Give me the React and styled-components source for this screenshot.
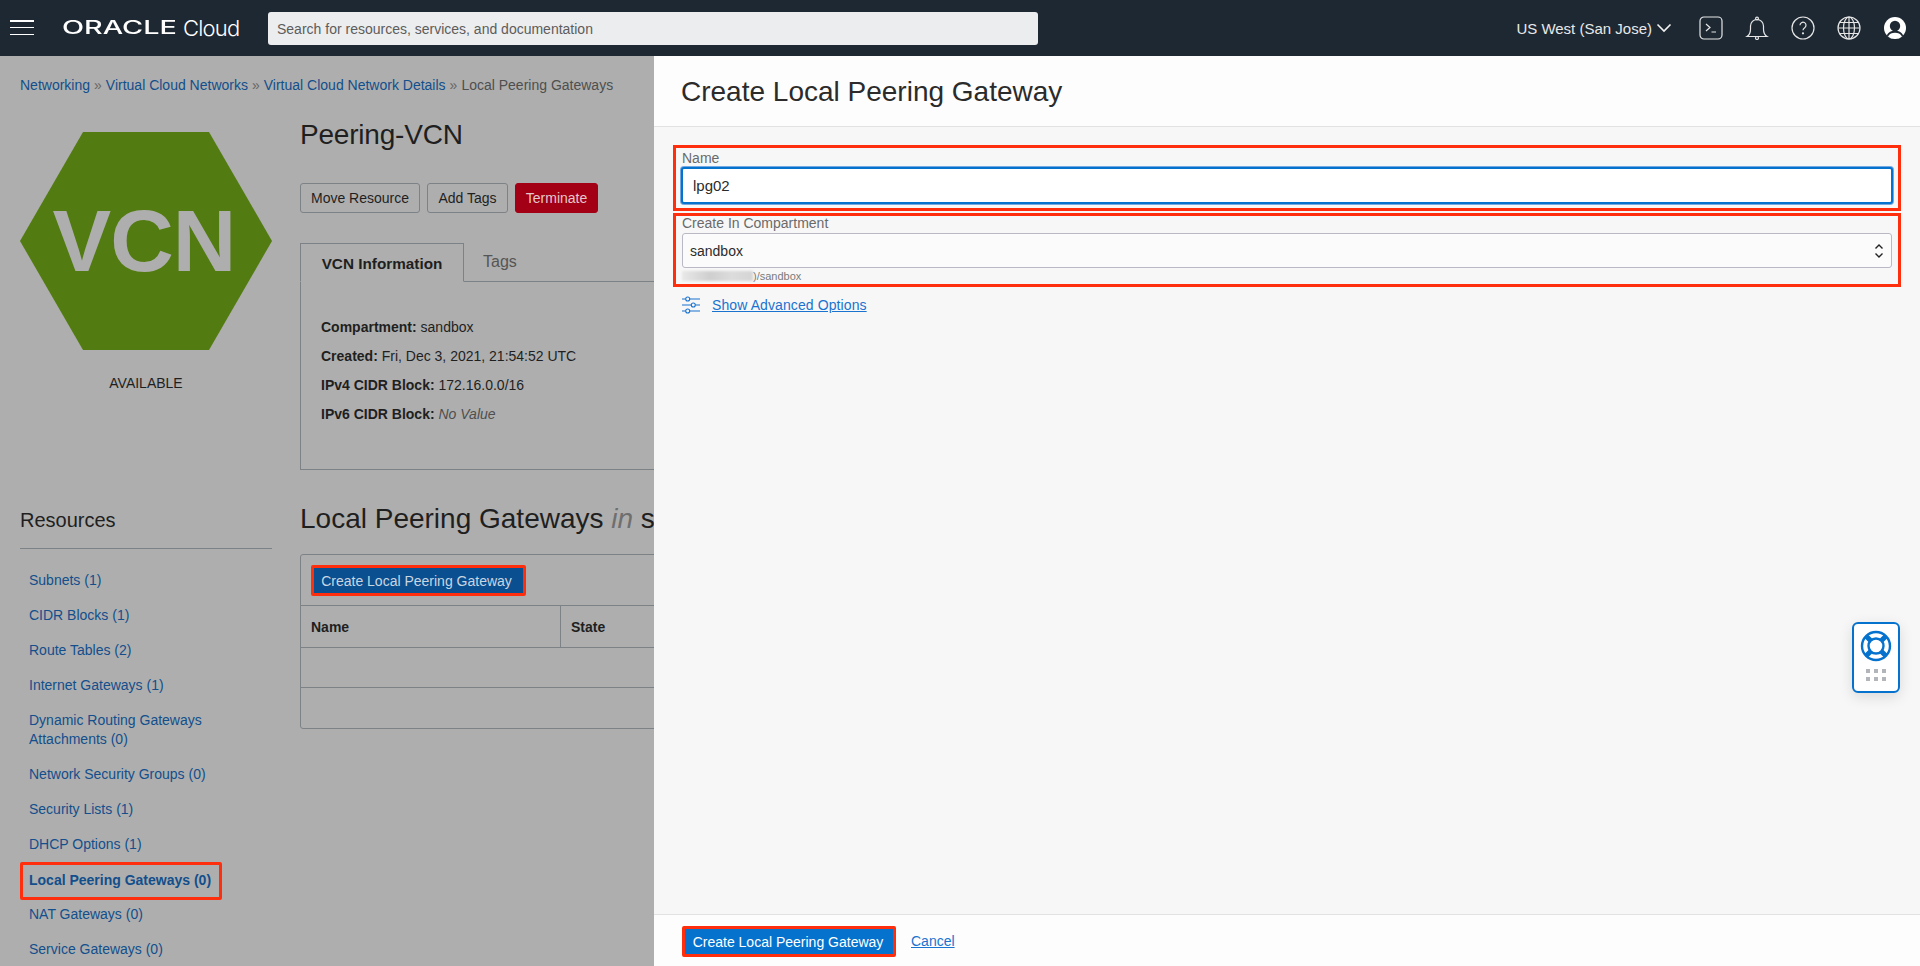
import React from "react";
import styled, { createGlobalStyle } from "styled-components";

const Global = createGlobalStyle`
  html, body { margin: 0; padding: 0; height: 100%; overflow: hidden; }
  body { font-family: "Liberation Sans", Arial, sans-serif; font-size: 14px; color: #1f1f1f; background: #aeaeae; }
  * { box-sizing: border-box; }
`;
const FONT = `"Liberation Sans", Arial, sans-serif`;

const Page = styled.div`position: relative; width: 1920px; height: 966px; display: flex; flex-direction: column; overflow: hidden;`;

/* top bar */
const TopBar = styled.header`flex: none; height: 56px; background: #1e2833; display: flex; align-items: center; color: #f2f2f2;`;
const Burger = styled.div`
  width: 24px; height: 15px; margin-left: 10px; margin-top: -1px;
  display: flex; flex-direction: column; justify-content: space-between;
  span { display: block; height: 1.5px; background: #fff; }
`;
const Logo = styled.div`display: flex; align-items: center; margin-left: 28px; width: 206px; color: #fff;`;
const LogoWord = styled.span`
  display: inline-block; width: 114px; font-family: Inter, sans-serif; font-weight: 500; font-size: 18px; line-height: 20px;
  transform: scaleX(1.6); transform-origin: left center;
`;
const LogoCloud = styled.span`margin-left: 7px; font-family: Inter, sans-serif; font-size: 22px; font-weight: 300; letter-spacing: -0.8px; line-height: 26px;`;
const Search = styled.div`
  width: 770px; height: 33px; background: #ecedee; border-radius: 3px; padding: 2px 0 0 9px;
  display: flex; align-items: center; color: #5c5c5c; font-size: 14px;
`;
const Region = styled.div`margin-left: auto; display: flex; align-items: center; gap: 4px; font-size: 15px; color: #e8e8e8;`;
const Icons = styled.div`display: flex; align-items: center; gap: 22px; margin-left: 27px; margin-right: 13px;`;
const TopIcon = styled.svg`display: block; width: 24px; height: 24px; fill: none; stroke: #e6e6e6; stroke-width: 1.2;`;

/* page body */
const Body = styled.div`flex: 1; display: flex; min-height: 0;`;
const Left = styled.div`flex: none; width: 654px; overflow: hidden; background: #aeaeae; padding: 20px 0 0 20px;`;
const Crumbs = styled.nav`height: 18px; line-height: 18px; font-size: 14px; white-space: nowrap; color: #4f4f4f;`;
const CrumbLink = styled.a`color: #124f8c;`;
const Sep = styled.span`color: #666; margin: 0 4px;`;
const Columns = styled.div`display: flex; gap: 28px; margin-top: 24px; width: 1300px;`;
const Side = styled.aside`flex: none; width: 252px; padding-top: 14px;`;
const Hex = styled.div`
  width: 252px; height: 218px; background: #527c11; color: #aeaeae;
  clip-path: polygon(25% 0, 75% 0, 100% 50%, 75% 100%, 25% 100%, 0 50%);
  display: flex; align-items: center; justify-content: center;
  font-family: ${FONT}; font-weight: 700; font-size: 88px; letter-spacing: -1px; padding-right: 4px;
`;
const Avail = styled.div`margin-top: 24px; text-align: center; height: 18px; line-height: 18px; font-size: 14px;`;
const ResHead = styled.h3`
  margin: 114px 0 0; padding-bottom: 14px; height: 43px; line-height: 28px; font-size: 20px; font-weight: 400;
  border-bottom: 1px solid #7d8287;
`;
const ResList = styled.ul`list-style: none; margin: 22px 0 0; padding: 0 0 0 9px;`;
const ResItem = styled.li`
  position: relative; line-height: 19px; color: #124f8c; font-size: 14px; margin-bottom: 16px;
  font-weight: ${p => (p.$active ? 700 : 400)};
  ${p => p.$active && `
    top: 1px;
    &::after { content: ""; box-sizing: border-box; position: absolute; left: -9px; top: -9px; width: 202px; height: 38px; border: 3px solid #ff2f0d; border-radius: 2px; }
  `}
`;
const Main = styled.main`flex: none; width: 1000px;`;
const Title = styled.h1`margin: 0; height: 34px; line-height: 34px; font-size: 28px; font-weight: 400; letter-spacing: -0.2px;`;
const Actions = styled.div`display: flex; gap: 7px; margin-top: 31px;`;
const Btn = styled.button`
  height: 30px; padding: 0; width: ${p => p.$w}px; border-radius: 3px; font: 400 14px ${FONT};
  color: ${p => (p.$danger ? "#e3c8cc" : "#1f1f1f")};
  background: ${p => (p.$danger ? "#a30016" : "transparent")};
  border: 1px solid ${p => (p.$danger ? "#a30016" : "#7d8287")};
`;
const Tabs = styled.div`display: flex; margin-top: 30px; height: 39px; border-bottom: 1px solid #7d8287;`;
const TabOn = styled.div`
  width: 164px; height: 39px; padding-top: 2px; border: 1px solid #7d8287; border-bottom-color: #aeaeae; background: #aeaeae;
  display: flex; align-items: center; justify-content: center; font-size: 15.3px; font-weight: 700;
`;
const TabOff = styled.div`margin-left: 19px; line-height: 38px; font-size: 16px; color: #555;`;
const Info = styled.div`height: 188px; padding: 31px 0 0 20px; border-left: 1px solid #7d8287; border-bottom: 1px solid #7d8287;`;
const InfoRow = styled.div`
  height: 29px; line-height: 29px; font-size: 14px;
  b { font-weight: 700; }
  i { color: #4f4f4f; }
`;
const H2 = styled.h2`
  margin: 33px 0 0; height: 32px; line-height: 32px; font-size: 28px; font-weight: 400; white-space: nowrap;
  em { color: #6f6f6f; }
`;
const Card = styled.div`margin-top: 19px; height: 175px; border: 1px solid #7d8287; border-radius: 3px;`;
const Toolbar = styled.div`height: 50px; padding: 10px 0 0 10px;`;
const DimCreate = styled.button`
  width: 215px; height: 31px; padding: 0 4px 0 0; background: #0a4f90; color: #c9d6e2; font: 400 14px ${FONT};
  border: 3px solid #ff2f0d; border-radius: 2px;
`;
const Row = styled.div`display: flex; height: ${p => p.$h}px; border-top: 1px solid #7d8287;`;
const Th = styled.div`
  width: ${p => p.$w}px; padding-left: 10px; line-height: 43px; font-weight: 700; font-size: 14px;
  ${p => p.$line && "border-right: 1px solid #7d8287;"}
`;

/* side panel */
const Panel = styled.section`flex: 1; display: flex; flex-direction: column; background: #f7f7f7; min-width: 0;`;
const PanelHead = styled.div`
  flex: none; height: 71px; background: #fdfdfd; border-bottom: 1px solid #e2e2e2; padding: 2px 0 0 27px;
  display: flex; align-items: center; font-size: 28px; font-weight: 400; color: #2b2b2b;
`;
const Form = styled.div`flex: 1; padding: 18px 19px 0 19px;`;
const Frame = styled.div`
  border: 3px solid #ff2f0d; padding: 0 5px 0 5px; height: ${p => p.$h}px; margin-bottom: 2px;
`;
const Label = styled.div`height: ${p => p.$h}px; line-height: ${p => p.$line}px; font-size: 14px; color: #6a6a6a; margin-left: 1px;`;
const TextBox = styled.div`
  height: 37px; background: #fff; border: 2px solid #0572ce; border-radius: 3px;
  box-shadow: 0 0 0 1px #73a9e2; padding-left: 10px; display: flex; align-items: center; font-size: 15px; color: #2b2b2b;
`;
const Select = styled.div`
  height: 35px; margin: 2px 1px 0 1px; background: #fbfbfb; border: 1px solid #b9b9c6; border-radius: 3px;
  padding: 0 7px 0 7px; display: flex; align-items: center; justify-content: space-between; font-size: 14px; color: #2b2b2b;
`;
const Path = styled.div`display: flex; align-items: center; height: 14px; margin: 1px 0 0 1px; font-size: 11px; color: #7a7a7a;`;
const Blur = styled.span`width: 71px; height: 10px; background: linear-gradient(90deg, #e8e8e8, #cfcfcf 40%, #dcdcdc 70%, #d5d5d5); filter: blur(1px);`;
const Advanced = styled.div`display: flex; align-items: center; gap: 12px; margin: 8px 0 0 9px; height: 20px;`;
const PanelLink = styled.a`color: #1a73cf; text-decoration: underline; font-size: 14px; letter-spacing: 0.1px;`;
const Foot = styled.div`
  flex: none; height: 52px; background: #fdfdfd; border-top: 1px solid #e2e2e2; padding: 11px 0 0 28px;
  display: flex; align-items: flex-start; gap: 15px;
`;
const CreateBtn = styled.button`
  width: 214px; height: 31px; padding: 0 2px 0 0; background: #0572ce; color: #fff; font: 400 14px ${FONT};
  border: 3px solid #ff2f0d; border-radius: 2px;
`;
const CancelLink = styled(PanelLink)`line-height: 31px; letter-spacing: 0;`;

/* floating help */
const Help = styled.div`
  position: absolute; left: 1852px; top: 622px; width: 48px; height: 71px; background: #fff; border: 2px solid #0572ce; border-radius: 6px;
  box-shadow: 0 4px 14px rgba(0,0,0,.12); display: flex; flex-direction: column; align-items: center; padding-top: 6px;
`;
const Dots = styled.div`
  display: grid; grid-template-columns: repeat(3, 4px); gap: 4px; margin-top: 7px;
  span { width: 4px; height: 4px; background: #b2b6ba; }
`;

const sideItems = [
  "Subnets (1)", "CIDR Blocks (1)", "Route Tables (2)", "Internet Gateways (1)",
  "Dynamic Routing Gateways Attachments (0)", "Network Security Groups (0)", "Security Lists (1)", "DHCP Options (1)",
  "Local Peering Gateways (0)", "NAT Gateways (0)", "Service Gateways (0)",
];

export default function App() {
  return (
    <Page>
      <Global />
      <TopBar>
        <Burger><span /><span /><span /></Burger>
        <Logo><LogoWord>ORACLE</LogoWord><LogoCloud>Cloud</LogoCloud></Logo>
        <Search>Search for resources, services, and documentation</Search>
        <Region>
          US West (San Jose)
          <svg width="16" height="10" viewBox="0 0 16 10" fill="none" stroke="#f2f2f2" strokeWidth="1.6"><path d="M1.5 1.5 8 8l6.5-6.5" /></svg>
        </Region>
        <Icons>
          <TopIcon viewBox="0 0 24 24"><rect x="1" y="1" width="22" height="22" rx="4" /><path d="M7 8l4 3.5L7 15M12.5 16H17" /></TopIcon>
          <TopIcon viewBox="0 0 24 24"><path d="M2 20.5c2.500-1.500 3.500-4 3.500-7.500V10a6.500 6.500 0 0 1 13 0v3c0 3.500 1 6 3.500 7.500H2z" /><circle cx="12" cy="2.500" r="1.400" /><circle cx="12" cy="22" r="1.500" /></TopIcon>
          <TopIcon viewBox="0 0 24 24"><circle cx="12" cy="12" r="11" /><path d="M9 9.200a3 3 0 1 1 4.700 2.500c-1 .7-1.700 1.200-1.700 2.600" /><circle cx="12" cy="17.300" r=".5" /></TopIcon>
          <TopIcon viewBox="0 0 24 24"><circle cx="12" cy="12" r="11" /><ellipse cx="12" cy="12" rx="5.500" ry="11" /><path d="M12 1v22M1 12h22M2.600 6.500h18.800M2.600 17.500h18.800" /></TopIcon>
          <svg width="24" height="24" viewBox="0 0 24 24" style={{ display: "block" }}>
            <circle cx="12" cy="12" r="11" fill="#fff" />
            <circle cx="12" cy="10" r="5.200" fill="#1e2833" />
            <path d="M3.800 19.500c1.600-3.600 4.600-4.800 8.200-4.800s6.600 1.200 8.200 4.800A11 11 0 0 1 12 23a11 11 0 0 1-8.200-3.500z" fill="#1e2833" />
            <path d="M5 20.500c1.500-2.800 4-3.800 7-3.800s5.500 1 7 3.800A10 10 0 0 1 12 23a10 10 0 0 1-7-2.500z" fill="#fff" />
          </svg>
        </Icons>
      </TopBar>
      <Body>
        <Left>
          <Crumbs>
            <CrumbLink>Networking</CrumbLink><Sep>»</Sep>
            <CrumbLink>Virtual Cloud Networks</CrumbLink><Sep>»</Sep>
            <CrumbLink>Virtual Cloud Network Details</CrumbLink><Sep>»</Sep>
            Local Peering Gateways
          </Crumbs>
          <Columns>
            <Side>
              <Hex>VCN</Hex>
              <Avail>AVAILABLE</Avail>
              <ResHead>Resources</ResHead>
              <ResList>
                {sideItems.map(t => (
                  <ResItem key={t} $active={t.startsWith("Local")}>{t}</ResItem>
                ))}
              </ResList>
            </Side>
            <Main>
              <Title>Peering-VCN</Title>
              <Actions>
                <Btn $w={120}>Move Resource</Btn>
                <Btn $w={81}>Add Tags</Btn>
                <Btn $w={83} $danger>Terminate</Btn>
              </Actions>
              <Tabs><TabOn>VCN Information</TabOn><TabOff>Tags</TabOff></Tabs>
              <Info>
                <InfoRow><b>Compartment:</b> sandbox</InfoRow>
                <InfoRow><b>Created:</b> Fri, Dec 3, 2021, 21:54:52 UTC</InfoRow>
                <InfoRow><b>IPv4 CIDR Block:</b> 172.16.0.0/16</InfoRow>
                <InfoRow><b>IPv6 CIDR Block:</b> <i>No Value</i></InfoRow>
              </Info>
              <H2>Local Peering Gateways <em>in</em> sandbox Compartment</H2>
              <Card>
                <Toolbar><DimCreate>Create Local Peering Gateway</DimCreate></Toolbar>
                <Row $h={42}><Th $w={260} $line>Name</Th><Th $w={200}>State</Th></Row>
                <Row $h={40} />
                <Row $h={42} />
              </Card>
            </Main>
          </Columns>
        </Left>
        <Panel>
          <PanelHead>Create Local Peering Gateway</PanelHead>
          <Form>
            <Frame $h={66}>
              <Label $h={19} $line={21}>Name</Label>
              <TextBox>lpg02</TextBox>
            </Frame>
            <Frame $h={74}>
              <Label $h={15} $line={15}>Create In Compartment</Label>
              <Select>
                sandbox
                <svg width="10" height="16" viewBox="0 0 10 16" fill="none" stroke="#222" strokeWidth="1.400"><path d="M1.500 5.500 5 2l3.500 3.500M1.500 10.500 5 14l3.500-3.500" /></svg>
              </Select>
              <Path><Blur />)/sandbox</Path>
            </Frame>
            <Advanced>
              <svg width="18" height="18" viewBox="0 0 18 18" fill="none" stroke="#1a73cf" strokeWidth="1.100">
                <path d="M0 3h3.500M8 3h10M0 9h9M13.500 9H18M0 15h3.500M8 15h10" />
                <circle cx="5.700" cy="3" r="2" /><circle cx="11.300" cy="9" r="2" /><circle cx="5.700" cy="15" r="2" />
              </svg>
              <PanelLink>Show Advanced Options</PanelLink>
            </Advanced>
          </Form>
          <Foot>
            <CreateBtn>Create Local Peering Gateway</CreateBtn>
            <CancelLink>Cancel</CancelLink>
          </Foot>
        </Panel>
      </Body>
      <Help>
        <svg width="32" height="32" viewBox="0 0 32 32" fill="none">
          <circle cx="16" cy="16" r="14" stroke="#0572ce" strokeWidth="2.400" />
          <circle cx="16" cy="16" r="7.500" stroke="#0572ce" strokeWidth="2.400" />
          <path d="M6 6l5 5M26 6l-5 5M6 26l5-5M26 26l-5-5" stroke="#0572ce" strokeWidth="5" />
        </svg>
        <Dots><span /><span /><span /><span /><span /><span /></Dots>
      </Help>
    </Page>
  );
}
